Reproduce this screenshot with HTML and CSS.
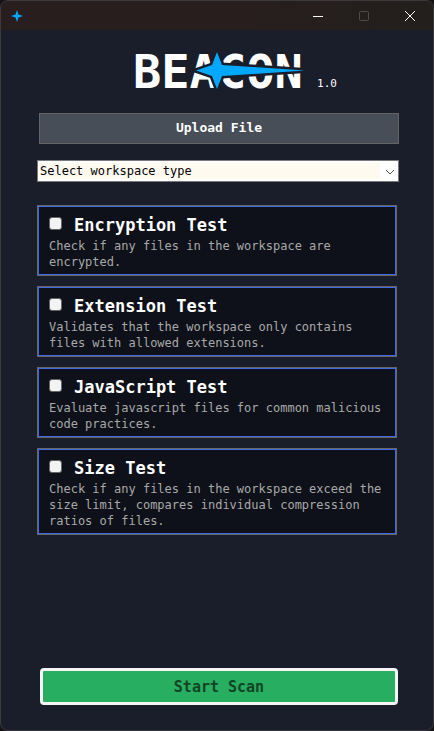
FILE: index.html
```html
<!DOCTYPE html>
<html lang="en">
<head>
<meta charset="utf-8">
<title>Beacon</title>
<meta name="viewport" content="width=device-width, initial-scale=1">
<link rel="stylesheet" href="styles.css">
</head>
<body>
<div class="window">
  <header class="titlebar">
    <svg class="app-icon" viewBox="0 0 14 14" aria-hidden="true"><path d="M7 1 8.500 5.500 13 7 8.500 8.500 7 13 5.500 8.500 1 7 5.500 5.500Z"/></svg>
    <div class="window-controls">
      <button class="control" type="button" aria-label="Minimize"><svg viewBox="0 0 12 12"><path d="M1 6.500H11"/></svg></button>
      <button class="control" type="button" aria-label="Maximize" disabled><svg viewBox="0 0 12 12"><rect x="1.500" y="1.500" width="9" height="9" rx="1"/></svg></button>
      <button class="control" type="button" aria-label="Close"><svg viewBox="0 0 12 12"><path d="M1 1 11 11M11 1 1 11"/></svg></button>
    </div>
  </header>
  <main class="content">
    <div class="brand">
      <svg class="logo" viewBox="0 0 176 44" role="img" aria-label="Beacon">
        <text x="0" y="40">BEACON</text>
        <path class="star" d="M63 22.500 79 17 84 4 89 17 172 22.500 89 28 84 41 79 28Z"/>
      </svg>
      <span class="version">1.0</span>
    </div>
    <button class="upload" type="button">Upload File</button>
    <div class="select-wrap">
      <select class="workspace" aria-label="Workspace type"><option>Select workspace type</option></select>
      <svg class="chevron" viewBox="0 0 10 6" aria-hidden="true"><path d="M1 1 5 5 9 1"/></svg>
    </div>
    <div class="tests">
      <section class="card">
        <label class="name"><input type="checkbox">Encryption Test</label>
        <p>Check if any files in the workspace are encrypted.</p>
      </section>
      <section class="card">
        <label class="name"><input type="checkbox">Extension Test</label>
        <p>Validates that the workspace only contains files with allowed extensions.</p>
      </section>
      <section class="card">
        <label class="name"><input type="checkbox">JavaScript Test</label>
        <p>Evaluate javascript files for common malicious code practices.</p>
      </section>
      <section class="card">
        <label class="name"><input type="checkbox">Size Test</label>
        <p>Check if any files in the workspace exceed the size limit, compares individual compression ratios of files.</p>
      </section>
    </div>
    <button class="start" type="button">Start Scan</button>
  </main>
</div>
</body>
</html>
```
FILE: styles.css
```css
* { box-sizing: border-box; }

body {
  margin: 0;
  background: #151314;
  color: #fff;
  font-family: "DejaVu Sans Mono", monospace;
}

button, select { font-family: inherit; }

.window {
  display: flex;
  flex-direction: column;
  min-height: 100vh;
  overflow: hidden;
  border: 1px solid #3c3a3c;
  border-radius: 8px;
  background: #1a1d2a;
}

.titlebar {
  display: flex;
  align-items: center;
  justify-content: space-between;
  height: 29px;
  padding-left: 9px;
  background: linear-gradient(90deg, #281e1d 50%, #221f1d);
}

.app-icon { width: 14px; height: 14px; fill: #00a8ff; }

.window-controls { display: flex; }

.control {
  display: flex;
  align-items: center;
  justify-content: center;
  width: 46px;
  height: 28px;
  padding: 0;
  border: 0;
  background: none;
  color: #fff;
}

.control:disabled { color: #4d4947; }
.control svg { width: 12px; height: 12px; fill: none; stroke: currentColor; }

.content {
  display: flex;
  flex: 1;
  flex-direction: column;
  padding: 18px 34px 25px 36px;
}

.brand {
  display: flex;
  align-items: flex-end;
  justify-content: center;
  gap: 8px;
  padding-left: 34px;
}

.logo { width: 176px; height: 44px; overflow: visible; }
.logo text { fill: #fff; font-size: 47px; font-weight: bold; }
.star { fill: #00a8ff; stroke: #1a1d2a; stroke-width: 5px; paint-order: stroke; }
.version { font-size: 11px; line-height: 16px; }

.upload {
  height: 31px;
  margin: 21px 0 16px 2px;
  padding: 0 0 2px;
  border: 1px solid #636463;
  background: #474e57;
  color: #fff;
  font-size: 13px;
  font-weight: bold;
}

.select-wrap { position: relative; display: flex; height: 22px; }

.workspace {
  flex: 1;
  min-width: 0;
  padding: 0 20px 1px 2px;
  appearance: none;
  border: 1px solid #7a7a7a;
  border-radius: 0;
  background: linear-gradient(#fffaf0, #fffaf0) 2px 2px / calc(100% - 20px) 16px no-repeat #fff;
  color: #000;
  font-size: 12px;
}

.chevron {
  position: absolute;
  top: 9px;
  right: 4px;
  width: 10px;
  height: 6px;
  fill: none;
  stroke: #555;
  pointer-events: none;
}

.tests {
  display: flex;
  flex-direction: column;
  gap: 10px;
  margin: 23px 2px 0 0;
}

.card {
  padding: 9px 11px 5px;
  border: 1px solid #666;
  background: #0e1119;
  box-shadow: inset 0 0 0 1px #4169e1;
}

.name {
  display: flex;
  align-items: center;
  gap: 12px;
  font-size: 17px;
  font-weight: bold;
  line-height: 20px;
}

.name input {
  width: 13px;
  height: 13px;
  margin: 0 0 3px;
  appearance: none;
  border: 1px solid #666;
  border-radius: 3px;
  background: #f3f3f3;
}

.name input:checked { background: #4169e1; }

.card p {
  margin: 3px 0 0;
  color: #a9a9a9;
  font-size: 12px;
  line-height: 16px;
}

.start {
  height: 37px;
  margin: auto 1px 0 3px;
  padding: 0;
  border: 3px solid #f5f5f5;
  border-radius: 4px;
  background: #27ae60;
  color: #0f4425;
  font-size: 15px;
  font-weight: bold;
}
```
